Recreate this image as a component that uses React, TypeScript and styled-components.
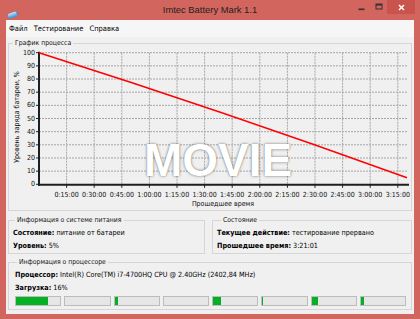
import React from 'react'
import styled, { createGlobalStyle } from 'styled-components'

const UI_FONT = `"DejaVu Sans Condensed", "DejaVu Sans", sans-serif`

const GlobalStyle = createGlobalStyle`
  html, body {
    margin: 0;
    padding: 0;
    background: #fff;
  }
  body {
    font-family: ${UI_FONT};
    font-stretch: condensed;
  }
`

const Window = styled.div`
  width: 420px;
  height: 319px;
  background: #d2655e;
  display: flex;
  flex-direction: column;
  overflow: hidden;
`

const TitleBar = styled.div`
  height: 20px;
  flex-shrink: 0;
  display: grid;
  grid-template-columns: 1fr auto 1fr;
`

const TitleIcon = styled.div`
  padding: 5px 0 0 7px;
`

const TitleText = styled.div`
  font-family: "Liberation Sans", Arial, sans-serif;
  font-size: 9.4px;
  line-height: 20px;
  color: #222;
`

const TitleButtons = styled.div`
  display: flex;
  justify-content: flex-end;
  padding-right: 5px;
`

const TitleButton = styled.div<{ $w: number; $close?: boolean }>`
  width: ${(p) => p.$w}px;
  height: 14px;
  display: flex;
  align-items: center;
  justify-content: center;
  background: ${(p) => (p.$close ? '#c9534d' : 'transparent')};
`

const Body = styled.div`
  flex: 1;
  display: flex;
  padding: 0 6px 5px;
`

const Client = styled.div`
  flex: 1;
  background: #f0f0f0;
  display: flex;
  flex-direction: column;
`

const MenuBar = styled.div`
  height: 17px;
  background: #f6f6f7;
  display: flex;
  align-items: center;
  font-size: 7.5px;
  color: #000;
`

const MenuItem = styled.div`
  padding: 0 3px;
`

const Content = styled.div`
  display: flex;
  flex-direction: column;
  padding: 0 2px;
`

const GroupBox = styled.div<{ $mt: number; $pad?: string; $w?: number }>`
  box-sizing: border-box;
  border: 1px solid #d6d6d6;
  margin-top: ${(p) => p.$mt}px;
  padding: ${(p) => p.$pad || '0'};
  ${(p) => (p.$w ? `width: ${p.$w}px; flex-shrink: 0;` : 'flex: 1;')}
  font-size: 7.2px;
  color: #000;
`

const Legend = styled.div<{ $ml?: number }>`
  width: fit-content;
  height: 11px;
  line-height: 11px;
  margin: -6px 0 0 ${(p) => p.$ml ?? 4}px;
  padding: 0 2px;
  background: #f0f0f0;
  font-size: 6.8px;
  color: #111;
`

const ChartArea = styled.div`
  position: relative;
  height: 161px;
`

const ChartSvg = styled.svg`
  display: block;
  font-family: ${UI_FONT};
  font-size: 7px;
`

const Watermark = styled.div`
  position: absolute;
  left: 135px;
  top: 88px;
  font-family: "Liberation Sans", Arial, sans-serif;
  font-weight: 700;
  font-size: 46px;
  line-height: 46px;
  color: #fff;
  text-shadow: 0 0 3px rgba(0, 0, 0, 0.45), 0 0 1px rgba(0, 0, 0, 0.3);
  pointer-events: none;
`

const Row = styled.div`
  display: flex;
  gap: 7px;
  margin-top: 9px;
`

const InfoLine = styled.div<{ $h: number }>`
  height: ${(p) => p.$h}px;
  line-height: ${(p) => p.$h}px;
  white-space: nowrap;
  b {
    font-weight: 700;
  }
`

const Bars = styled.div`
  display: flex;
  gap: 3px;
  margin-top: 2px;
`

const Bar = styled.div`
  flex: 1;
  height: 10px;
  box-sizing: border-box;
  border: 1px solid #bcbcbc;
  background: #e6e6e6;
`

const BarFill = styled.div`
  height: 100%;
  background: #06b025;
`

// chart geometry (svg coords)
const X0 = 30
const STEP_X = 27.6
const Y_TOP = 3.7
const Y_BOT = 135.3
const STEP_Y = (Y_BOT - Y_TOP) / 10
const X_END = 398

const coreLoads = [72, 0, 7, 0, 18, 2, 14, 7]

const BatteryIcon = () => (
  <svg width="12" height="10" viewBox="0 0 12 10">
    <defs>
      <linearGradient id="bat" x1="0" y1="0" x2="0" y2="1">
        <stop offset="0" stopColor="#bfe8ff" />
        <stop offset="1" stopColor="#2f8ee0" />
      </linearGradient>
    </defs>
    <g transform="rotate(-18 6 5)">
      <rect x="1" y="2.5" width="9" height="5" rx="1.5" fill="url(#bat)" />
      <rect x="10" y="3.8" width="1.5" height="2.4" fill="#3a8fd6" />
    </g>
  </svg>
)

const Chart = () => {
  const hGrid = Array.from({ length: 10 }, (_, i) => i + 1)
  const vGrid = Array.from({ length: 13 }, (_, i) => i + 1)
  const label = (i: number) => {
    const m = i * 15
    return `${Math.floor(m / 60)}:${String(m % 60).padStart(2, '0')}:00`
  }
  return (
    <ChartSvg width="402" height="161" viewBox="0 0 402 161">
      {hGrid.map((i) => (
        <line key={'h' + i} x1={X0} x2={X_END} y1={Y_BOT - i * STEP_Y} y2={Y_BOT - i * STEP_Y}
          stroke="#a6a6a6" strokeWidth="1" strokeDasharray="2 1" />
      ))}
      {vGrid.map((i) => (
        <line key={'v' + i} x1={X0 + i * STEP_X} x2={X0 + i * STEP_X} y1={Y_TOP} y2={Y_BOT}
          stroke="#a6a6a6" strokeWidth="1" strokeDasharray="2 1" />
      ))}
      {Array.from({ length: 11 }, (_, i) => i).map((i) => (
        <g key={'yl' + i}>
          <line x1={X0 - 3} x2={X0} y1={Y_BOT - i * STEP_Y} y2={Y_BOT - i * STEP_Y} stroke="#222" />
          <text x={X0 - 4} y={Y_BOT - i * STEP_Y} textAnchor="end" dominantBaseline="central" fill="#111">
            {i * 10}
          </text>
        </g>
      ))}
      {vGrid.map((i) => (
        <g key={'xl' + i}>
          <line x1={X0 + i * STEP_X} x2={X0 + i * STEP_X} y1={Y_BOT} y2={Y_BOT + 3.5} stroke="#222" />
          <text x={X0 + i * STEP_X} y={148} textAnchor="middle" fill="#111">
            {label(i)}
          </text>
        </g>
      ))}
      <line x1={X0} x2={X0} y1={Y_TOP - 1} y2={Y_BOT + 1.5} stroke="#1e1e1e" strokeWidth="2" />
      <line x1={X0 - 1} x2={X_END + 2} y1={Y_BOT + 0.5} y2={Y_BOT + 0.5} stroke="#1e1e1e" strokeWidth="2" />
      <path d={`M ${X0} ${Y_TOP} Q 214 62 ${X_END} ${Y_BOT - 0.5 * STEP_Y}`} fill="none" stroke="#ff0000" strokeWidth="1.6" />
      <text x="7.7" y="68" transform="rotate(-90 7.7 68)" textAnchor="middle" dominantBaseline="central" fill="#111">
        Уровень заряда батареи, %
      </text>
      <text x="214" y="156.5" textAnchor="middle" fill="#111">
        Прошедшее время
      </text>
    </ChartSvg>
  )
}

export default function App() {
  return (
    <>
      <GlobalStyle />
      <Window>
        <TitleBar>
          <TitleIcon>
            <BatteryIcon />
          </TitleIcon>
          <TitleText>Imtec Battery Mark 1.1</TitleText>
          <TitleButtons>
            <TitleButton $w={20}>
              <svg width="7" height="10" viewBox="0 0 7 10">
                <rect x="0.5" y="6.5" width="6" height="1.6" fill="#333" />
              </svg>
            </TitleButton>
            <TitleButton $w={16}>
              <svg width="8" height="10" viewBox="0 0 8 10">
                <rect x="1" y="2" width="6" height="5" fill="none" stroke="#333" strokeWidth="1" />
                <rect x="1" y="2" width="6" height="1.6" fill="#333" />
              </svg>
            </TitleButton>
            <TitleButton $w={28} $close>
              <svg width="7" height="7" viewBox="0 0 7 7">
                <path d="M1 1 L6 6 M6 1 L1 6" stroke="#fff" strokeWidth="1.5" />
              </svg>
            </TitleButton>
          </TitleButtons>
        </TitleBar>
        <Body>
          <Client>
            <MenuBar>
              <MenuItem>Файл</MenuItem>
              <MenuItem>Тестирование</MenuItem>
              <MenuItem>Справка</MenuItem>
            </MenuBar>
            <Content>
              <GroupBox $mt={6} style={{ height: 168 }}>
                <Legend>График процесса</Legend>
                <ChartArea>
                  <Chart />
                  <Watermark>MOVIE</Watermark>
                </ChartArea>
              </GroupBox>
              <Row>
                <GroupBox $mt={0} $w={197} $pad="0 4px 1px">
                  <Legend $ml={2}>Информация о системе питания</Legend>
                  <InfoLine $h={13}>
                    <b>Состояние:</b> питание от батареи
                  </InfoLine>
                  <InfoLine $h={13}>
                    <b>Уровень:</b> 5%
                  </InfoLine>
                </GroupBox>
                <GroupBox $mt={0} $pad="0 4px 1px">
                  <Legend $ml={4}>Состояние</Legend>
                  <InfoLine $h={13}>
                    <b>Текущее действие:</b> тестирование прервано
                  </InfoLine>
                  <InfoLine $h={13}>
                    <b>Прошедшее время:</b> 3:21:01
                  </InfoLine>
                </GroupBox>
              </Row>
              <GroupBox $mt={8} $pad="0 5px 3px 6px">
                <Legend $ml={2}>Информация о процессоре</Legend>
                <InfoLine $h={12.5} style={{ marginTop: 1 }}>
                  <b>Процессор:</b> Intel(R) Core(TM) i7-4700HQ CPU @ 2.40GHz (2402,84 MHz)
                </InfoLine>
                <InfoLine $h={12.5}>
                  <b>Загрузка:</b> 16%
                </InfoLine>
                <Bars>
                  {coreLoads.map((v, i) => (
                    <Bar key={i}>
                      <BarFill style={{ width: `${v}%` }} />
                    </Bar>
                  ))}
                </Bars>
              </GroupBox>
            </Content>
          </Client>
        </Body>
      </Window>
    </>
  )
}
